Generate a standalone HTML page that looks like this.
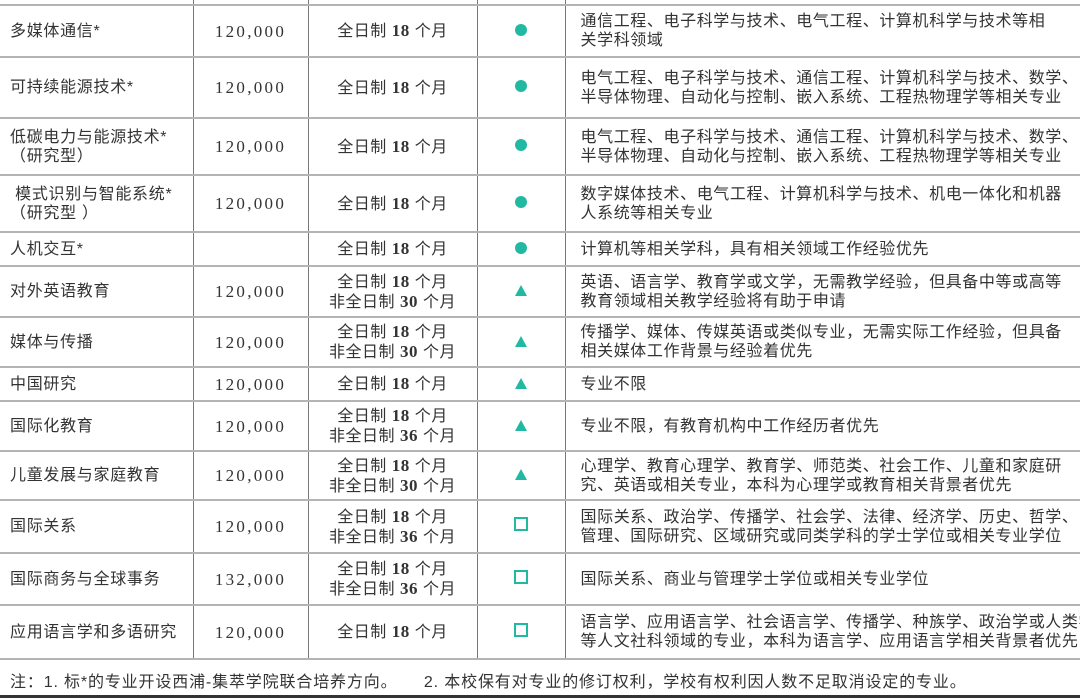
<!DOCTYPE html>
<html><head><meta charset="utf-8"><style>
body{margin:0;width:1080px;height:698px;background:#fff;overflow:hidden;position:relative;font-family:"Liberation Sans","Noto Sans CJK SC",sans-serif;color:#333;}
table{position:absolute;left:0;top:0;border-collapse:collapse;table-layout:fixed;width:1082px;}
td{border-bottom:2px solid #b4b4b4;border-left:1px solid #777;font-size:16px;letter-spacing:0.7px;line-height:19px;padding:0;vertical-align:middle;}
td:first-child{border-left:none;padding-left:10px;}
td.n{text-align:center;font-family:"Liberation Serif",serif;font-size:17px;letter-spacing:2.3px;}
td.c{text-align:center;letter-spacing:0.5px;}
td.c b{font-family:"Liberation Serif",serif;font-size:17px;}
td.s{text-align:center;}
td.d{padding-left:15px;white-space:nowrap;overflow:hidden;letter-spacing:0.6px;}
.dot{display:inline-block;width:12px;height:12px;border-radius:50%;background:#22b9a2;}
.tri{display:inline-block;width:0;height:0;border-left:6px solid transparent;border-right:6px solid transparent;border-bottom:11px solid #22b9a2;}
.sq{display:inline-block;width:10px;height:10px;border:2px solid #22b9a2;}
.note{position:absolute;left:10px;top:668px;font-size:16px;letter-spacing:0.85px;color:#333;white-space:pre;}
.bar{position:absolute;left:0;top:695px;width:1080px;height:3px;background:#333;}
</style></head><body>
<table>
<colgroup><col style="width:193px"><col style="width:115px"><col style="width:169px"><col style="width:88px"><col style="width:517px"></colgroup>
<tr style="height:5px"><td></td><td></td><td></td><td></td><td></td></tr>
<tr style="height:52px"><td>多媒体通信*</td><td class="n">120,000</td><td class="c">全日制 <b>18</b> 个月</td><td class="s"><span class="dot"></span></td><td class="d">通信工程、电子科学与技术、电气工程、计算机科学与技术等相<br>关学科领域</td></tr>
<tr style="height:61px"><td>可持续能源技术*</td><td class="n">120,000</td><td class="c">全日制 <b>18</b> 个月</td><td class="s"><span class="dot"></span></td><td class="d">电气工程、电子科学与技术、通信工程、计算机科学与技术、数学、<br>半导体物理、自动化与控制、嵌入系统、工程热物理学等相关专业</td></tr>
<tr style="height:57px"><td>低碳电力与能源技术*<br>（研究型）</td><td class="n">120,000</td><td class="c">全日制 <b>18</b> 个月</td><td class="s"><span class="dot"></span></td><td class="d">电气工程、电子科学与技术、通信工程、计算机科学与技术、数学、<br>半导体物理、自动化与控制、嵌入系统、工程热物理学等相关专业</td></tr>
<tr style="height:57px"><td>&nbsp;模式识别与智能系统*<br>（研究型 ）</td><td class="n">120,000</td><td class="c">全日制 <b>18</b> 个月</td><td class="s"><span class="dot"></span></td><td class="d">数字媒体技术、电气工程、计算机科学与技术、机电一体化和机器<br>人系统等相关专业</td></tr>
<tr style="height:34px"><td>人机交互*</td><td class="n"></td><td class="c">全日制 <b>18</b> 个月</td><td class="s"><span class="dot"></span></td><td class="d">计算机等相关学科，具有相关领域工作经验优先</td></tr>
<tr style="height:51px"><td>对外英语教育</td><td class="n">120,000</td><td class="c">全日制 <b>18</b> 个月<br>非全日制 <b>30</b> 个月</td><td class="s"><span class="tri"></span></td><td class="d">英语、语言学、教育学或文学，无需教学经验，但具备中等或高等<br>教育领域相关教学经验将有助于申请</td></tr>
<tr style="height:50px"><td>媒体与传播</td><td class="n">120,000</td><td class="c">全日制 <b>18</b> 个月<br>非全日制 <b>30</b> 个月</td><td class="s"><span class="tri"></span></td><td class="d">传播学、媒体、传媒英语或类似专业，无需实际工作经验，但具备<br>相关媒体工作背景与经验着优先</td></tr>
<tr style="height:34px"><td>中国研究</td><td class="n">120,000</td><td class="c">全日制 <b>18</b> 个月</td><td class="s"><span class="tri"></span></td><td class="d">专业不限</td></tr>
<tr style="height:50px"><td>国际化教育</td><td class="n">120,000</td><td class="c">全日制 <b>18</b> 个月<br>非全日制 <b>36</b> 个月</td><td class="s"><span class="tri"></span></td><td class="d">专业不限，有教育机构中工作经历者优先</td></tr>
<tr style="height:49px"><td>儿童发展与家庭教育</td><td class="n">120,000</td><td class="c">全日制 <b>18</b> 个月<br>非全日制 <b>30</b> 个月</td><td class="s"><span class="tri"></span></td><td class="d">心理学、教育心理学、教育学、师范类、社会工作、儿童和家庭研<br>究、英语或相关专业，本科为心理学或教育相关背景者优先</td></tr>
<tr style="height:53px"><td>国际关系</td><td class="n">120,000</td><td class="c">全日制 <b>18</b> 个月<br>非全日制 <b>36</b> 个月</td><td class="s"><span class="sq"></span></td><td class="d">国际关系、政治学、传播学、社会学、法律、经济学、历史、哲学、<br>管理、国际研究、区域研究或同类学科的学士学位或相关专业学位</td></tr>
<tr style="height:52px"><td>国际商务与全球事务</td><td class="n">132,000</td><td class="c">全日制 <b>18</b> 个月<br>非全日制 <b>36</b> 个月</td><td class="s"><span class="sq"></span></td><td class="d">国际关系、商业与管理学士学位或相关专业学位</td></tr>
<tr style="height:54px"><td>应用语言学和多语研究</td><td class="n">120,000</td><td class="c">全日制 <b>18</b> 个月</td><td class="s"><span class="sq"></span></td><td class="d">语言学、应用语言学、社会语言学、传播学、种族学、政治学或人类学<br>等人文社科领域的专业，本科为语言学、应用语言学相关背景者优先</td></tr>
</table>
<div class="note">注：1. 标*的专业开设西浦-集萃学院联合培养方向。     2. 本校保有对专业的修订权利，学校有权利因人数不足取消设定的专业。</div>
<div class="bar"></div>
</body></html>
